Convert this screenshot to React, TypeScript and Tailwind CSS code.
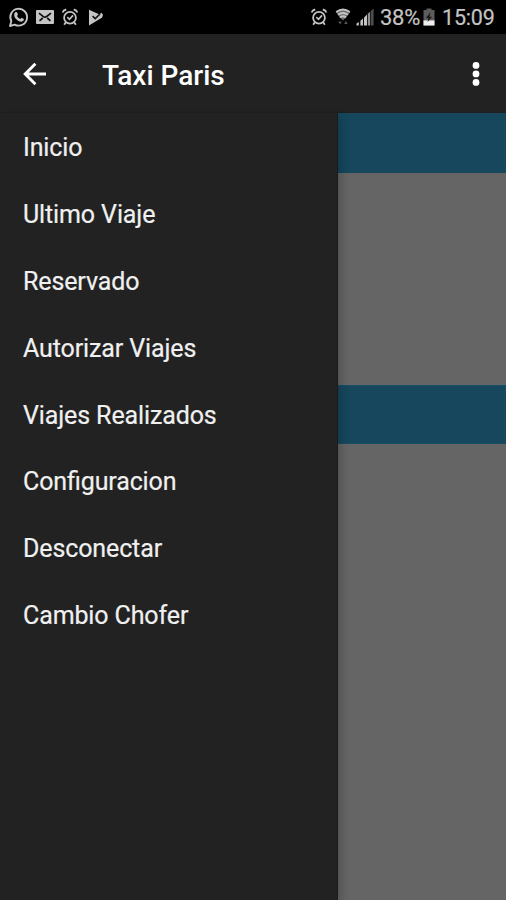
const menuItems = [
    "Inicio",
    "Ultimo Viaje",
    "Reservado",
    "Autorizar Viajes",
    "Viajes Realizados",
    "Configuracion",
    "Desconectar",
    "Cambio Chofer",
];

function WhatsappIcon() {
    return (
        <svg width="22" height="22" viewBox="0 0 22 22" fill="none">
            <path d="M2 20 L3.3 15.2 A8.4 8.4 0 1 1 6.7 18.6 Z" stroke="currentColor" strokeWidth="1.9" strokeLinejoin="round" />
            <path d="M7.4 6 L9.1 6.2 L10 8.7 L9 10 Q10 12 12.2 13 L13.5 11.7 L16 13 Q16 15.3 13.6 15.7 Q9.8 15.6 7.1 11.9 Q5 8.6 7.4 6 Z" fill="currentColor" />
        </svg>
    );
}

function MailIcon() {
    return (
        <svg width="18" height="14" viewBox="0 0 18 14" fill="none">
            <rect width="18" height="14" rx="1" fill="currentColor" />
            <path d="M3 3.2 L7 6.3 Q9 7.8 11 6.3 L15 3.2 M3.5 10.8 L6.8 8 M14.5 10.8 L11.2 8" stroke="#111" strokeWidth="1.7" />
        </svg>
    );
}

function AlarmIcon() {
    return (
        <svg width="18" height="18" viewBox="0 0 18 18" fill="none" stroke="currentColor">
            <circle cx="9" cy="9.7" r="5.9" strokeWidth="1.8" />
            <path d="M1.6 4.6 Q2.4 2 5.2 1.5 M16.4 4.6 Q15.6 2 12.8 1.5 M4.8 14.2 L3.2 16.8 M13.2 14.2 L14.8 16.8" strokeWidth="1.8" />
            <path d="M6.3 9.2 L8.5 11.3 L12 7.4" strokeWidth="1.7" />
        </svg>
    );
}

function PlayCheckIcon() {
    return (
        <svg width="16" height="17" viewBox="0 0 16 17" fill="none">
            <path d="M1 0.8 L11.6 5.4 L13.2 3.8 L15 5.6 L14.2 8.6 L1 16.4 Z" fill="currentColor" />
            <path d="M4.6 7.2 L7.2 9.6 L12 5" stroke="#111" strokeWidth="1.6" />
        </svg>
    );
}

function WifiIcon() {
    return (
        <svg width="16" height="18" viewBox="0 0 16 18" fill="none">
            <path d="M0.8 4 Q8 -2 15.2 4 L10.5 10 L8 12.4 L5.5 10 Z" fill="#6c6c6c" />
            <path d="M1.2 4 Q8 -1.2 14.8 4 M3 6.8 Q8 3.2 13 6.8 M4.9 9.4 Q8 7.2 11.1 9.4" stroke="currentColor" strokeWidth="1.9" />
            <path d="M3.4 13.4 H6.8 L5.1 16.6 Z M9.2 16 L10.9 12.8 L12.6 16 Z" fill="#585858" />
        </svg>
    );
}

function SignalIcon() {
    return (
        <svg width="18" height="18" viewBox="0 0 18 18">
            <path d="M0.5 15.6 L2.8 14 V17.6 H0.5 Z M4.4 12.8 L7 10.4 V17.6 H4.4 Z" fill="currentColor" />
            <path d="M8 9.4 L11 6.6 V17.6 H8 Z" fill="currentColor" />
            <path d="M11.8 5.8 L14 3.8 V17.6 H11.8 Z" fill="#909090" />
            <path d="M14.6 3.2 L17.6 0.5 V17.6 H14.6 Z" fill="#4c4c4c" />
        </svg>
    );
}

function BatteryIcon() {
    return (
        <svg width="12" height="18" viewBox="0 0 12 18">
            <path d="M3.5 0.5 H8.5 V2 H11.5 V17.5 H0.5 V2 H3.5 Z" fill="#5c5c5c" />
            <path d="M0.5 12.4 H11.5 V17.5 H0.5 Z" fill="#ededed" />
            <path d="M7.6 4 L3 10 H5.4 L4.6 14 L9 8.7 H6.4 Z" fill="#171717" />
        </svg>
    );
}

export default function App() {
    return (
        <div className="flex h-[900px] w-[506px] flex-col overflow-hidden bg-[#222222] font-[Roboto,sans-serif]">
            {/* Status Bar */}
            <div className="flex h-[34px] shrink-0 items-center justify-between bg-black pr-3 pl-2 text-[#c4c4c4]">
                <div className="flex items-center">
                    <WhatsappIcon />
                    <div className="ml-[6px]"><MailIcon /></div>
                    <div className="ml-[7px]"><AlarmIcon /></div>
                    <div className="ml-[9px]"><PlayCheckIcon /></div>
                </div>
                <div className="flex items-center">
                    <AlarmIcon />
                    <div className="ml-[7px]"><WifiIcon /></div>
                    <div className="ml-[5px]"><SignalIcon /></div>
                    <span className="ml-[6px] w-[41px] pt-[2px] text-[22px] leading-[32px] tracking-[-0.3px] whitespace-nowrap [-webkit-text-stroke:0.2px_#c4c4c4]">38%</span>
                    <div className="ml-[2px]"><BatteryIcon /></div>
                    <span className="ml-[7px] w-[52px] pt-[2px] text-[21.5px] leading-[32px] tracking-[-0.2px] [-webkit-text-stroke:0.2px_#c4c4c4]">15:09</span>
                </div>
            </div>

            {/* App Bar */}
            <header className="flex h-[79px] shrink-0 items-center border-b border-[#1f1f1f] pt-[2px] pr-[25px] pl-[23px] text-white">
                <svg width="24" height="24" viewBox="0 0 24 24" fill="none" stroke="currentColor" strokeWidth="2.9">
                    <path d="M23 12 H2.5 M12.4 1.8 L2.2 12 L12.4 22.2" />
                </svg>
                <h1 className="ml-[55px] pt-[3px] text-[28px] leading-8 font-medium">Taxi Paris</h1>
                <svg className="ml-auto" width="10" height="26" viewBox="0 0 10 26" fill="currentColor">
                    <circle cx="5" cy="4.4" r="3.4" />
                    <circle cx="5" cy="12.9" r="3.4" />
                    <circle cx="5" cy="21.4" r="3.4" />
                </svg>
            </header>

            <div className="flex min-h-0 flex-1">
                {/* Drawer */}
                <nav className="z-10 w-[338px] shrink-0 border-r border-[#1b1b1b] bg-[#222222] shadow-[4px_4px_8px_rgba(0,0,0,0.18)]">
                    <ul className="pt-[1.3px]">
                        {menuItems.map((item) => (
                            <li key={item} className="flex h-[66.8px] items-center pt-px pl-[23px] text-[25px] tracking-[-0.12px] text-[#f0f0f0] [-webkit-text-stroke:0.2px_#f0f0f0] [font-feature-settings:'liga'_1]">
                                {item}
                            </li>
                        ))}
                    </ul>
                </nav>

                {/* Dimmed page */}
                <main className="flex-1 bg-[#656565]">
                    <div className="h-[60px] bg-[#16475c]"></div>
                    <div className="mt-[211.5px] h-[59px] border-y border-[#164d67] bg-[#16475c]"></div>
                </main>
            </div>
        </div>
    );
}
